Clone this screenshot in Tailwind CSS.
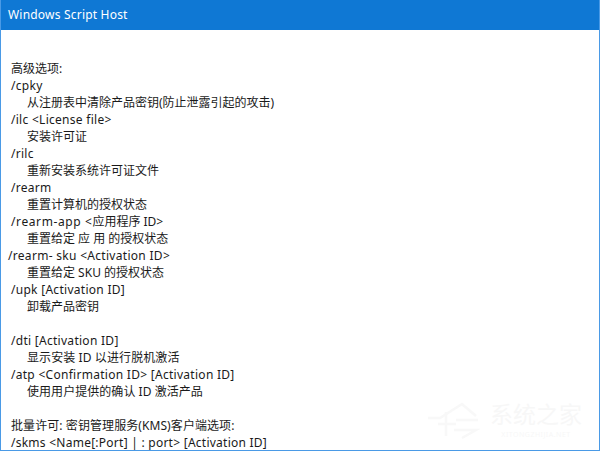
<!DOCTYPE html>
<html lang="zh-CN">
<head>
  <meta charset="UTF-8">
  <title>Windows Script Host</title>
  <script src="https://cdn.jsdelivr.net/npm/@tailwindcss/browser@4"></script>
</head>
<body class="bg-white">
  <div class="relative w-[600px] h-[451px] overflow-hidden flex flex-col bg-white border-x border-b border-[#4a9ae6] font-['Noto_Sans','Noto_Sans_CJK_SC',sans-serif] text-[12px] text-[#1a1a1a]">
    <!-- Title bar -->
    <div class="h-[30px] shrink-0 -mx-px bg-[#0f78d4] text-white flex items-center pl-[8px] text-[12px] tracking-[0.2px]">Windows Script Host</div>

    <!-- Dialog text -->
    <div class="pt-[30px] pl-[10px] leading-[17px]">
      <div>高级选项:</div>
      <div class="tracking-[0.28px]">/cpky</div>
      <div class="pl-[16px]">从注册表中清除产品密钥(防止泄露引起的攻击)</div>
      <div class="tracking-[0.28px]">/ilc &lt;License file&gt;</div>
      <div class="pl-[16px]">安装许可证</div>
      <div class="tracking-[0.28px]">/rilc</div>
      <div class="pl-[16px]">重新安装系统许可证文件</div>
      <div class="tracking-[0.28px]">/rearm</div>
      <div class="pl-[16px]">重置计算机的授权状态</div>
      <div><span class="tracking-[0.6px]">/rearm-app &lt;</span>应用程序 ID&gt;</div>
      <div class="pl-[16px]">重置给定 应 用 的授权状态</div>
      <div class="-ml-[3px] tracking-[0.3px]">/rearm- sku &lt;Activation ID&gt;</div>
      <div class="pl-[16px]">重置给定 SKU 的授权状态</div>
      <div class="tracking-[0.28px]">/upk [Activation ID]</div>
      <div class="pl-[16px]">卸载产品密钥</div>
      <div class="h-[17px]"></div>
      <div class="tracking-[0.28px]">/dti [Activation ID]</div>
      <div class="pl-[16px] tracking-[0.1px]">显示安装 ID 以进行脱机激活</div>
      <div class="tracking-[0.28px]">/atp &lt;Confirmation ID&gt; [Activation ID]</div>
      <div class="pl-[16px] tracking-[0.05px]">使用用户提供的确认 ID 激活产品</div>
      <div class="h-[17px]"></div>
      <div class="tracking-[0.08px]">批量许可: 密钥管理服务(KMS)客户端选项:</div>
      <div class="tracking-[0.25px]">/skms &lt;Name[:Port] | : port&gt; [Activation ID]</div>
    </div>

    <!-- Watermark -->
    <div class="absolute left-[425px] top-[398px] flex items-center gap-[2px] text-[#f7f7f7]">
      <svg width="62" height="44" viewBox="0 0 62 44" fill="none" stroke="#f8f8f8" stroke-width="2.5">
        <path d="M2 20H14L36 6L50 18"/>
        <path d="M20 14V38M12 26H30M30 22H52M28 32H50L36 40"/>
      </svg>
      <div class="flex flex-col items-center gap-[3px]">
        <span class="text-[23px] leading-[26px]">系统之家</span>
        <span class="text-[7px] leading-[9px] tracking-[0.5px]">XITONGZHIJIA.NET</span>
      </div>
    </div>
  </div>
</body>
</html>
